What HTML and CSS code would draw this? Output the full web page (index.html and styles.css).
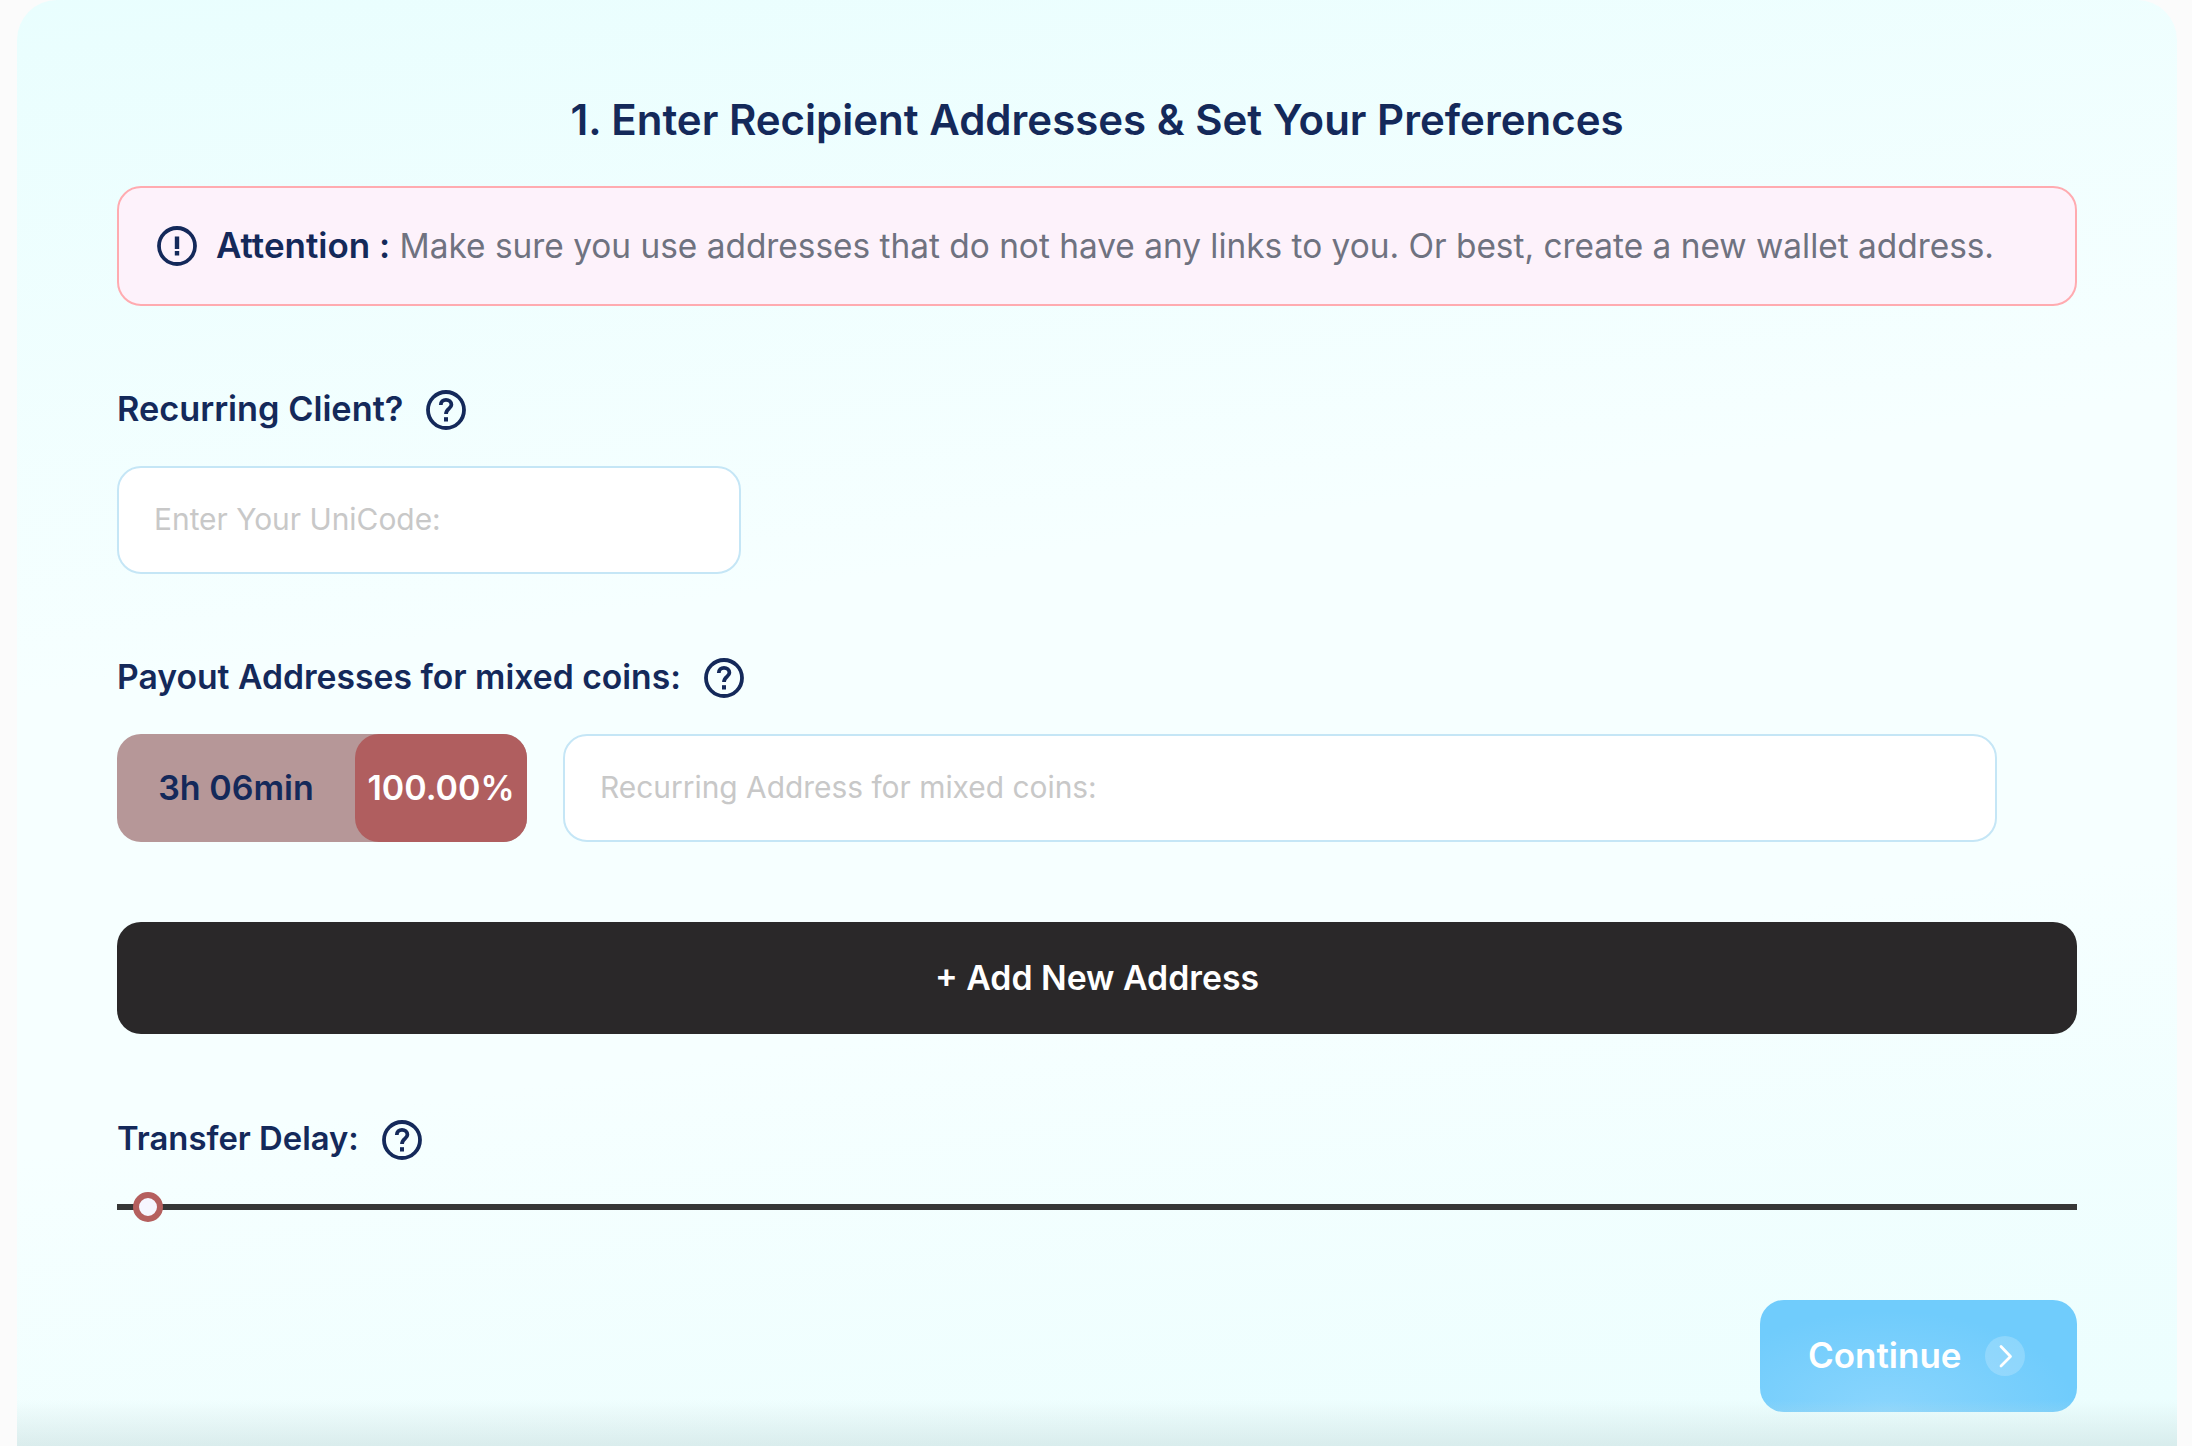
FILE: index.html
```html
<!DOCTYPE html>
<html lang="en">
<head>
    <meta charset="UTF-8">
    <meta name="viewport" content="width=device-width, initial-scale=1.0">
    <title>Enter Recipient Addresses</title>
    <link rel="stylesheet" href="styles.css">
</head>
<body>
    <svg class="sprites" width="0" height="0">
        <symbol id="icon-help" viewBox="0 0 40 40">
            <circle cx="20" cy="20" r="18" fill="none" stroke="#14295a" stroke-width="3.8"/>
            <path d="M14.8 15c0-3.2 2.3-5.2 5.2-5.2s5.4 1.9 5.4 4.9c0 4-5.4 4-5.4 9.3" fill="none" stroke="#14295a" stroke-width="3.8"/>
            <rect x="18" y="27.2" width="4" height="4.3" fill="#14295a"/>
        </symbol>
        <symbol id="icon-alert" viewBox="0 0 40 40">
            <circle cx="20" cy="20" r="18" fill="none" stroke="#14295a" stroke-width="3.8"/>
            <rect x="17.8" y="10.5" width="4.4" height="12.5" fill="#14295a"/>
            <rect x="17.8" y="25" width="4.4" height="4.5" fill="#14295a"/>
        </symbol>
    </svg>

    <div class="card">
        <h1>1. Enter Recipient Addresses &amp; Set Your Preferences</h1>

        <div class="alert">
            <svg class="icon"><use href="#icon-alert"/></svg>
            <p class="alert-text"><strong>Attention :</strong> Make sure you use addresses that do not have any links to you. Or best, create a new wallet address.</p>
        </div>

        <div class="label-row label-client">
            <label for="unicode">Recurring Client?</label>
            <svg class="icon"><use href="#icon-help"/></svg>
        </div>
        <input class="field field-code" id="unicode" type="text" placeholder="Enter Your UniCode:">

        <div class="label-row label-payout">
            <label for="payout">Payout Addresses for mixed coins:</label>
            <svg class="icon"><use href="#icon-help"/></svg>
        </div>
        <div class="address-row">
            <div class="pill">
                <span class="pill-time">3h 06min</span>
                <span class="pill-share">100.00%</span>
            </div>
            <input class="field field-address" id="payout" type="text" placeholder="Recurring Address for mixed coins:">
        </div>

        <button class="add-btn">+ Add New Address</button>

        <div class="label-row label-delay">
            <label for="delay">Transfer Delay:</label>
            <svg class="icon"><use href="#icon-help"/></svg>
        </div>
        <input class="slider" id="delay" type="range" min="0" max="1931" value="16">

        <div class="actions">
            <button class="continue-btn">
                <span class="continue-label">Continue</span>
                <span class="continue-arrow">
                    <svg viewBox="0 0 40 40" width="40" height="40"><path d="M16 10.5 25.5 20.5 16 30" fill="none" stroke="#fff" stroke-width="2.8" stroke-linecap="round" stroke-linejoin="round"/></svg>
                </span>
            </button>
        </div>
        <div class="bottom-fade"></div>
    </div>
</body>
</html>
```

FILE: styles.css
```css
html, body {
    height: 100%;
}
body {
    margin: 0;
    padding: 0 15px 0 17px;
    box-sizing: border-box;
    height: 1446px;
    overflow: hidden;
    background: #fbfbfb;
    font-family: Inter, "Noto Sans", sans-serif;
    color: #14295a;
}
.sprites {
    display: block;
    height: 0;
}
.card {
    position: relative;
    height: 1446px;
    box-sizing: border-box;
    padding: 0 100px;
    border-radius: 40px 40px 0 0;
    background: linear-gradient(172deg, #e9fefe 0%, #f6ffff 40%, #f6ffff 66%, #ebfefe 100%);
    overflow: hidden;
}
h1 {
    margin: 0;
    padding-top: 96px;
    height: 90px;
    font-size: 42px;
    line-height: 48px;
    font-weight: 600;
    text-align: center;
}
.icon {
    flex: none;
    width: 40px;
    height: 40px;
}
.alert {
    display: flex;
    align-items: center;
    gap: 19px;
    box-sizing: border-box;
    height: 120px;
    padding: 0 38px;
    border: 2px solid #ffabb0;
    border-radius: 24px;
    background: #fdf2fb;
}
.alert-text {
    margin: 0 0 2px;
    font-size: 33.4px;
    color: #6f7280;
}
.alert-text strong {
    font-size: 35px;
    font-weight: 600;
    color: #14295a;
}
.label-row {
    display: flex;
    align-items: center;
    gap: 23px;
    height: 40px;
}
.label-row label {
    padding-bottom: 4px;
    font-weight: 600;
}
.label-client {
    margin-top: 84px;
    margin-bottom: 36px;
}
.label-client label {
    font-size: 34.3px;
}
.label-payout {
    margin-top: 84px;
    margin-bottom: 36px;
}
.label-payout label {
    font-size: 33.7px;
}
.label-delay {
    margin-top: 86px;
    margin-bottom: 32px;
}
.label-delay label {
    font-size: 32.8px;
}
.field {
    display: block;
    box-sizing: border-box;
    height: 108px;
    padding: 0 35px 2px;
    border: 2px solid #c5e6f6;
    border-radius: 24px;
    background: #fff;
    font-family: inherit;
    font-size: 29.9px;
    outline: none;
}
.field::placeholder {
    color: #c8c8c8;
    opacity: 1;
}
.field-code {
    width: 624px;
}
.address-row {
    display: flex;
    gap: 36px;
}
.field-address {
    width: 1434px;
}
.pill {
    display: flex;
    width: 410px;
    height: 108px;
    border-radius: 24px;
    background: #b69798;
    font-size: 34px;
    font-weight: 600;
}
.pill-time, .pill-share {
    display: flex;
    align-items: center;
    justify-content: center;
    padding-bottom: 2px;
    box-sizing: border-box;
}
.pill-time {
    width: 238px;
}
.pill-share {
    flex: 1;
    border-radius: 24px;
    background: #b05e5f;
    color: #fff;
}
.add-btn {
    display: block;
    width: 100%;
    height: 112px;
    margin-top: 80px;
    padding-bottom: 2px;
    border: none;
    border-radius: 24px;
    background: #2a2829;
    color: #fff;
    font-family: inherit;
    font-size: 33.8px;
    font-weight: 600;
}
.slider {
    display: block;
    -webkit-appearance: none;
    appearance: none;
    width: 100%;
    height: 30px;
    margin: 0;
    background: transparent;
}
.slider::-webkit-slider-runnable-track {
    height: 6px;
    background: #363636;
}
.slider::-webkit-slider-thumb {
    -webkit-appearance: none;
    box-sizing: border-box;
    width: 30px;
    height: 30px;
    margin-top: -12px;
    border: 6px solid #b55f5e;
    border-radius: 50%;
    background: #f6f6ff;
}
.actions {
    display: flex;
    justify-content: flex-end;
    margin-top: 78px;
}
.continue-btn {
    display: flex;
    align-items: center;
    gap: 23px;
    box-sizing: border-box;
    width: 317px;
    height: 112px;
    padding: 0 0 0 48px;
    border: none;
    border-radius: 24px;
    background: radial-gradient(ellipse 60% 90% at 40% 100%, #8ad5fd 0%, #70ccfc 100%);
    color: #fff;
    font-family: inherit;
    font-size: 35px;
    font-weight: 600;
}
.continue-label {
    padding-bottom: 3px;
}
.continue-arrow {
    display: block;
    width: 40px;
    height: 40px;
    border-radius: 50%;
    background: rgba(255, 255, 255, 0.2);
}
.bottom-fade {
    position: absolute;
    left: 0;
    right: 0;
    bottom: 0;
    height: 46px;
    background: linear-gradient(180deg, rgba(200, 222, 222, 0) 0%, rgba(200, 222, 222, 0.55) 100%);
}
```
